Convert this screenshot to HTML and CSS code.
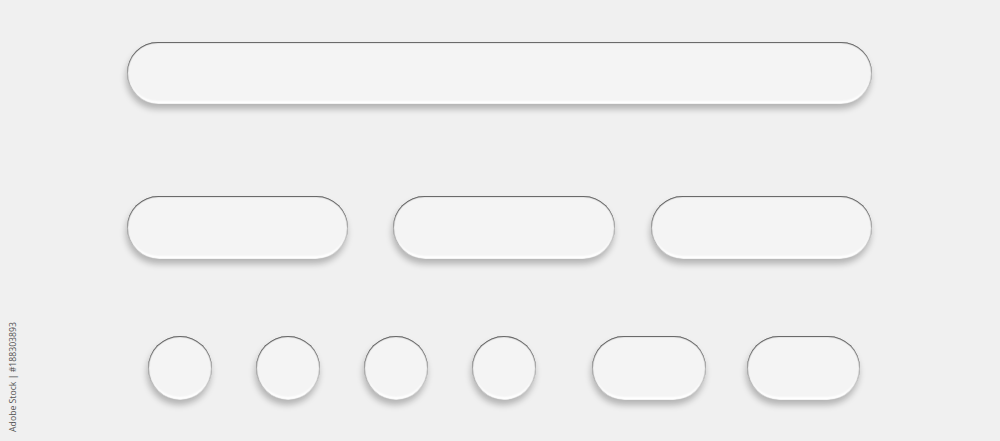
FILE: index.html
```html
<!DOCTYPE html>
<html lang="en">
<head>
    <meta charset="UTF-8">
    <meta name="viewport" content="width=device-width, initial-scale=1.0">
    <title>Buttons</title>
    <link rel="stylesheet" href="styles.css">
</head>
<body>

    <div class="board">
        <!-- Long search bar -->
        <div class="row row-top">
            <div class="pill bar-wide"></div>
        </div>

        <!-- Three medium buttons -->
        <div class="row row-mid">
            <div class="pill bar-mid"></div>
            <div class="pill bar-mid second"></div>
            <div class="pill bar-mid third"></div>
        </div>

        <!-- Round buttons and short pills -->
        <div class="row row-low">
            <div class="pill dot"></div>
            <div class="pill dot"></div>
            <div class="pill dot"></div>
            <div class="pill dot"></div>
            <div class="pill short first-short"></div>
            <div class="pill short"></div>
        </div>
    </div>

    <div class="stamp">Adobe Stock | #188303893</div>

</body>
</html>
```

FILE: styles.css
```css
body {
    margin: 0;
    padding: 0;
    background-color: #f0f0f0;
    font-family: 'Open Sans', 'DejaVu Sans', sans-serif;
    height: 441px;
    overflow: hidden;
}

.board {
    padding-left: 127px;
}

.row {
    display: flex;
}

.row-top {
    padding-top: 42px;
}

.row-mid {
    margin-top: 92px;
}

.row-low {
    margin-top: 77px;
    padding-left: 21px;
    gap: 44px;
}

.pill {
    background-color: #f4f4f4;
    border-radius: 40px;
    box-shadow:
        inset 0 1px 1px rgba(0, 0, 0, 0.6),
        inset 1px 0 1px rgba(0, 0, 0, 0.3),
        inset -1px 0 1px rgba(0, 0, 0, 0.22),
        inset 0 -3px 2px #ffffff,
        -1px 5px 6px rgba(0, 0, 0, 0.25);
}

.bar-wide {
    width: 745px;
    height: 62px;
}

.bar-mid {
    width: 221px;
    height: 63px;
}

.bar-mid.second {
    margin-left: 45px;
    width: 222px;
}

.bar-mid.third {
    margin-left: 36px;
}

.dot {
    width: 64px;
    height: 64px;
    border-radius: 50%;
}

.short {
    width: 113px;
    height: 64px;
    margin-left: -3px;
}

.first-short {
    margin-left: 12px;
    width: 114px;
}

.stamp {
    position: absolute;
    left: 7px;
    bottom: 9px;
    writing-mode: vertical-rl;
    transform: rotate(180deg);
    white-space: nowrap;
    font-size: 8.7px;
    color: #555555;
}
```
